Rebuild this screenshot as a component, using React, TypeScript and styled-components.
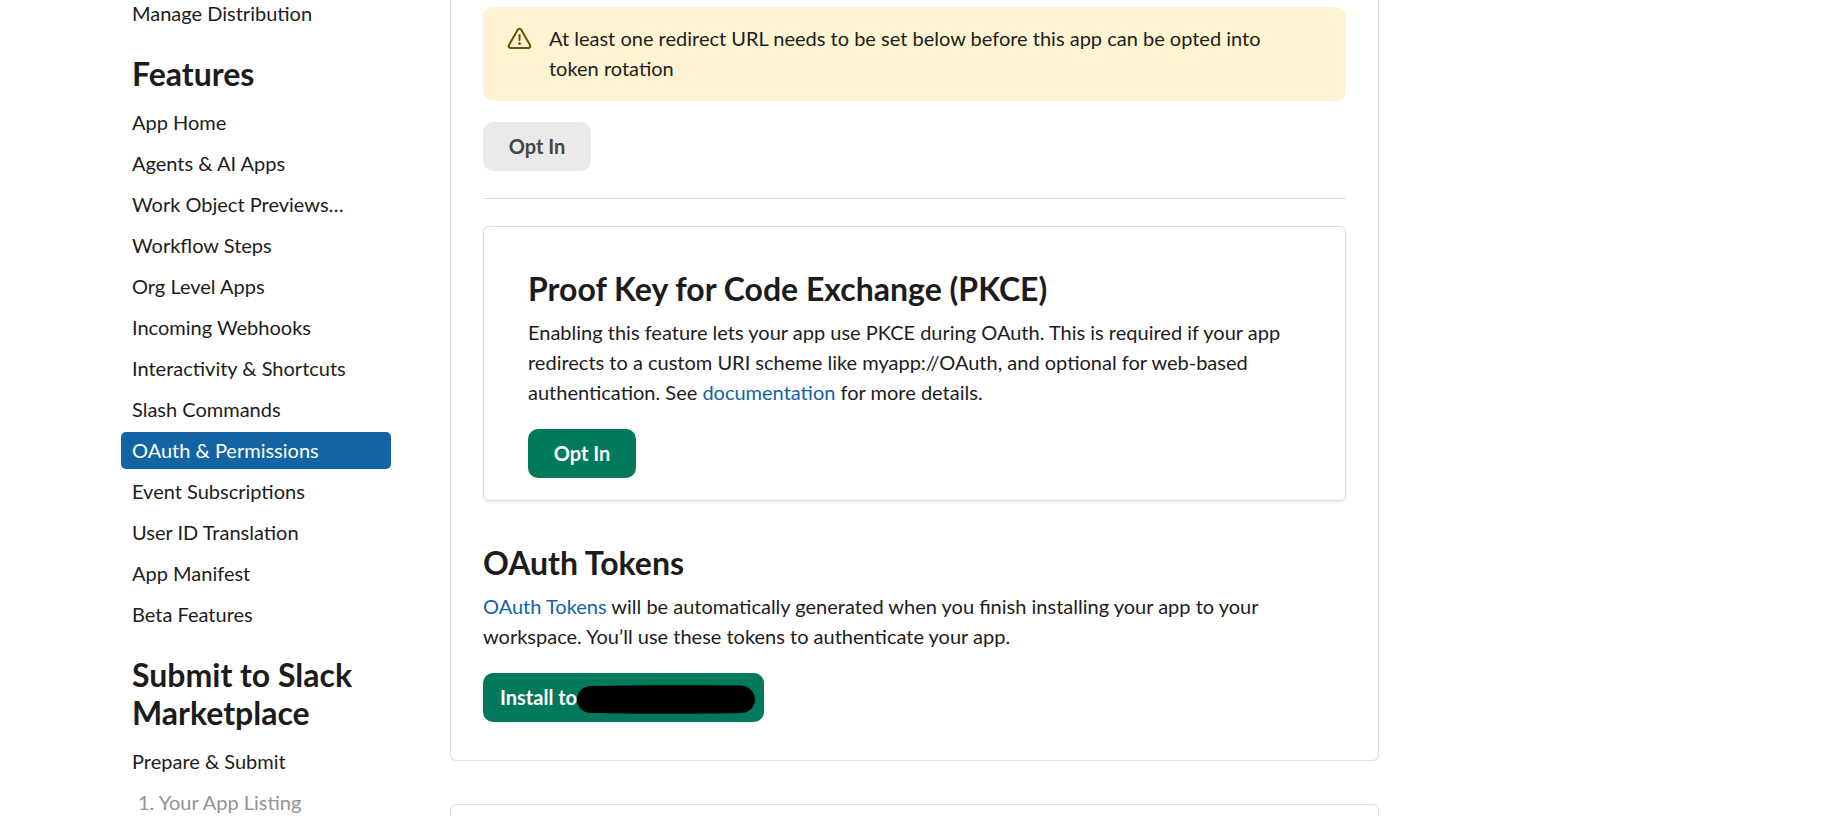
import React from "react";
import styled, { createGlobalStyle } from "styled-components";

const GlobalStyle = createGlobalStyle`
  *, *::before, *::after { box-sizing: border-box; }
  html { overflow: hidden; }
  body {
    margin: 0;
    background: #fff;
    color: #1d1c1d;
    font-family: Lato, "Noto Sans", sans-serif;
    font-size: 20px;
    line-height: 30px;
  }
`;

const Page = styled.div`
  display: flex;
  align-items: flex-start;
  gap: 59px;
  height: 100vh;
  padding: 0 24px 0 121px;
  overflow: hidden;
`;

const Sidebar = styled.nav`
  flex: 0 0 270px;
  margin-top: -5px;
`;

const NavHeading = styled.h2`
  margin: 23px 0 11px;
  padding-left: 11px;
  font-size: 32px;
  line-height: 38px;
  font-weight: 700;
`;

const NavList = styled.ul`
  display: flex;
  flex-direction: column;
  gap: 4px;
  margin: 0;
  padding: 0;
  list-style: none;
`;

const NavLink = styled.a<{ $active?: boolean; $step?: boolean }>`
  display: block;
  padding: 0 12px 0 ${(p) => (p.$step ? 17 : 11)}px;
  border-radius: 5px;
  line-height: 37px;
  white-space: nowrap;
  text-decoration: none;
  color: ${(p) => (p.$active ? "#fff" : p.$step ? "#949394" : "#1d1c1d")};
  background: ${(p) => (p.$active ? "#1264a3" : "transparent")};
  font-weight: 400;
`;

const Main = styled.main`
  flex: 1 1 0;
  min-width: 0;
  max-width: 929px;
  display: flex;
  flex-direction: column;
  gap: 43px;
`;

const Panel = styled.section<{ $continued?: boolean }>`
  padding: ${(p) => (p.$continued ? "7px 32px 38px" : "38px 32px")};
  border: 1px solid #e0e0e0;
  border-radius: 6px;
  ${(p) =>
    p.$continued &&
    `
    border-top: 0;
    border-top-left-radius: 0;
    border-top-right-radius: 0;
  `}
`;

const Alert = styled.div`
  display: flex;
  align-items: flex-start;
  gap: 17px;
  padding: 16px 60px 18px 24px;
  margin-bottom: 21px;
  border-radius: 10px;
  background: #fff4d1;
`;

const AlertIcon = styled.svg`
  flex: none;
  width: 25px;
  height: 30px;
  color: #6b4f0c;
`;

const Text = styled.p`
  margin: 0;
`;

const Button = styled.button`
  position: relative;
  height: 49px;
  min-width: 108px;
  padding: 0 17px 2px;
  border: 0;
  border-radius: 10px;
  background: #007a5a;
  color: #fff;
  font: inherit;
  font-weight: 700;
  &:disabled {
    background: #eaeaea;
    color: #454447;
  }
`;

const InstallButton = styled(Button)`
  width: 281px;
  text-align: left;
`;

const Redaction = styled.svg`
  position: absolute;
  top: 12px;
  right: 9px;
  width: 178px;
  height: 29px;
`;

const Rule = styled.hr`
  height: 1px;
  margin: 27px 0;
  border: 0;
  background: #dddddd;
`;

const Card = styled.section`
  padding: 43px 44px 22px;
  margin-bottom: 43px;
  border: 1px solid #dddddd;
  border-radius: 6px;
  box-shadow: 0 1px 3px rgba(0, 0, 0, 0.1);
`;

const Heading = styled.h2`
  margin: 0 0 9px;
  font-size: 32px;
  line-height: 38px;
  font-weight: 700;
`;

const Body = styled.p`
  margin: 0 0 22px;
`;

const Link = styled.a`
  color: #1264a3;
  text-decoration: none;
`;

const features = [
  "App Home",
  "Agents & AI Apps",
  "Work Object Previews…",
  "Workflow Steps",
  "Org Level Apps",
  "Incoming Webhooks",
  "Interactivity & Shortcuts",
  "Slash Commands",
  "OAuth & Permissions",
  "Event Subscriptions",
  "User ID Translation",
  "App Manifest",
  "Beta Features",
];

export default function App() {
  return (
    <>
      <GlobalStyle />
      <Page>
        <Sidebar aria-label="App settings">
          <NavList>
            <li>
              <NavLink href="#">Manage Distribution</NavLink>
            </li>
          </NavList>
          <NavHeading>Features</NavHeading>
          <NavList>
            {features.map((label) => {
              const active = label === "OAuth & Permissions";
              return (
                <li key={label}>
                  <NavLink href="#" $active={active} aria-current={active ? "page" : undefined}>
                    {label}
                  </NavLink>
                </li>
              );
            })}
          </NavList>
          <NavHeading>Submit to Slack Marketplace</NavHeading>
          <NavList>
            <li>
              <NavLink href="#">Prepare &amp; Submit</NavLink>
            </li>
            <li>
              <NavLink href="#" $step>
                1. Your App Listing
              </NavLink>
            </li>
          </NavList>
        </Sidebar>

        <Main>
          <Panel $continued>
            <Alert role="alert">
              <AlertIcon viewBox="0 -1 25 30" fill="none" stroke="currentColor" aria-hidden="true">
                <path
                  d="M10.6 5.9 2 21.1C1.2 22.6 2.1 24 3.7 24H21.3C22.9 24 23.8 22.6 23 21.1L14.4 5.9C13.5 4.5 11.5 4.5 10.6 5.9Z"
                  strokeWidth="2"
                  strokeLinejoin="round"
                />
                <path d="M12.5 11V16" strokeWidth="2" strokeLinecap="round" />
                <circle cx="12.5" cy="19.7" r="1.4" fill="currentColor" stroke="none" />
              </AlertIcon>
              <Text>
                At least one redirect URL needs to be set below before this app can be opted into
                token rotation
              </Text>
            </Alert>
            <Button type="button" disabled>
              Opt In
            </Button>
            <Rule />
            <Card>
              <Heading>Proof Key for Code Exchange (PKCE)</Heading>
              <Body>
                Enabling this feature lets your app use PKCE during OAuth. This is required if your
                app redirects to a custom URI scheme like myapp://OAuth, and optional for web-based
                authentication. See <Link href="#">documentation</Link> for more details.
              </Body>
              <Button type="button">Opt In</Button>
            </Card>
            <Heading>OAuth Tokens</Heading>
            <Body>
              <Link href="#">OAuth Tokens</Link> will be automatically generated when you finish
              installing your app to your workspace. You’ll use these tokens to authenticate your
              app.
            </Body>
            <InstallButton type="button">
              Install to
              <Redaction viewBox="0 0 178 29" aria-hidden="true">
                <path
                  d="M14 1C60 0 110 0 164 0.5C172 1 178 7 178 14.5C178 22 172 28 164 28C120 29 60 29 14 28C6 28 0 22 0 14.5C0 7 6 1 14 1Z"
                  fill="#000"
                />
              </Redaction>
            </InstallButton>
          </Panel>
          <Panel />
        </Main>
      </Page>
    </>
  );
}
